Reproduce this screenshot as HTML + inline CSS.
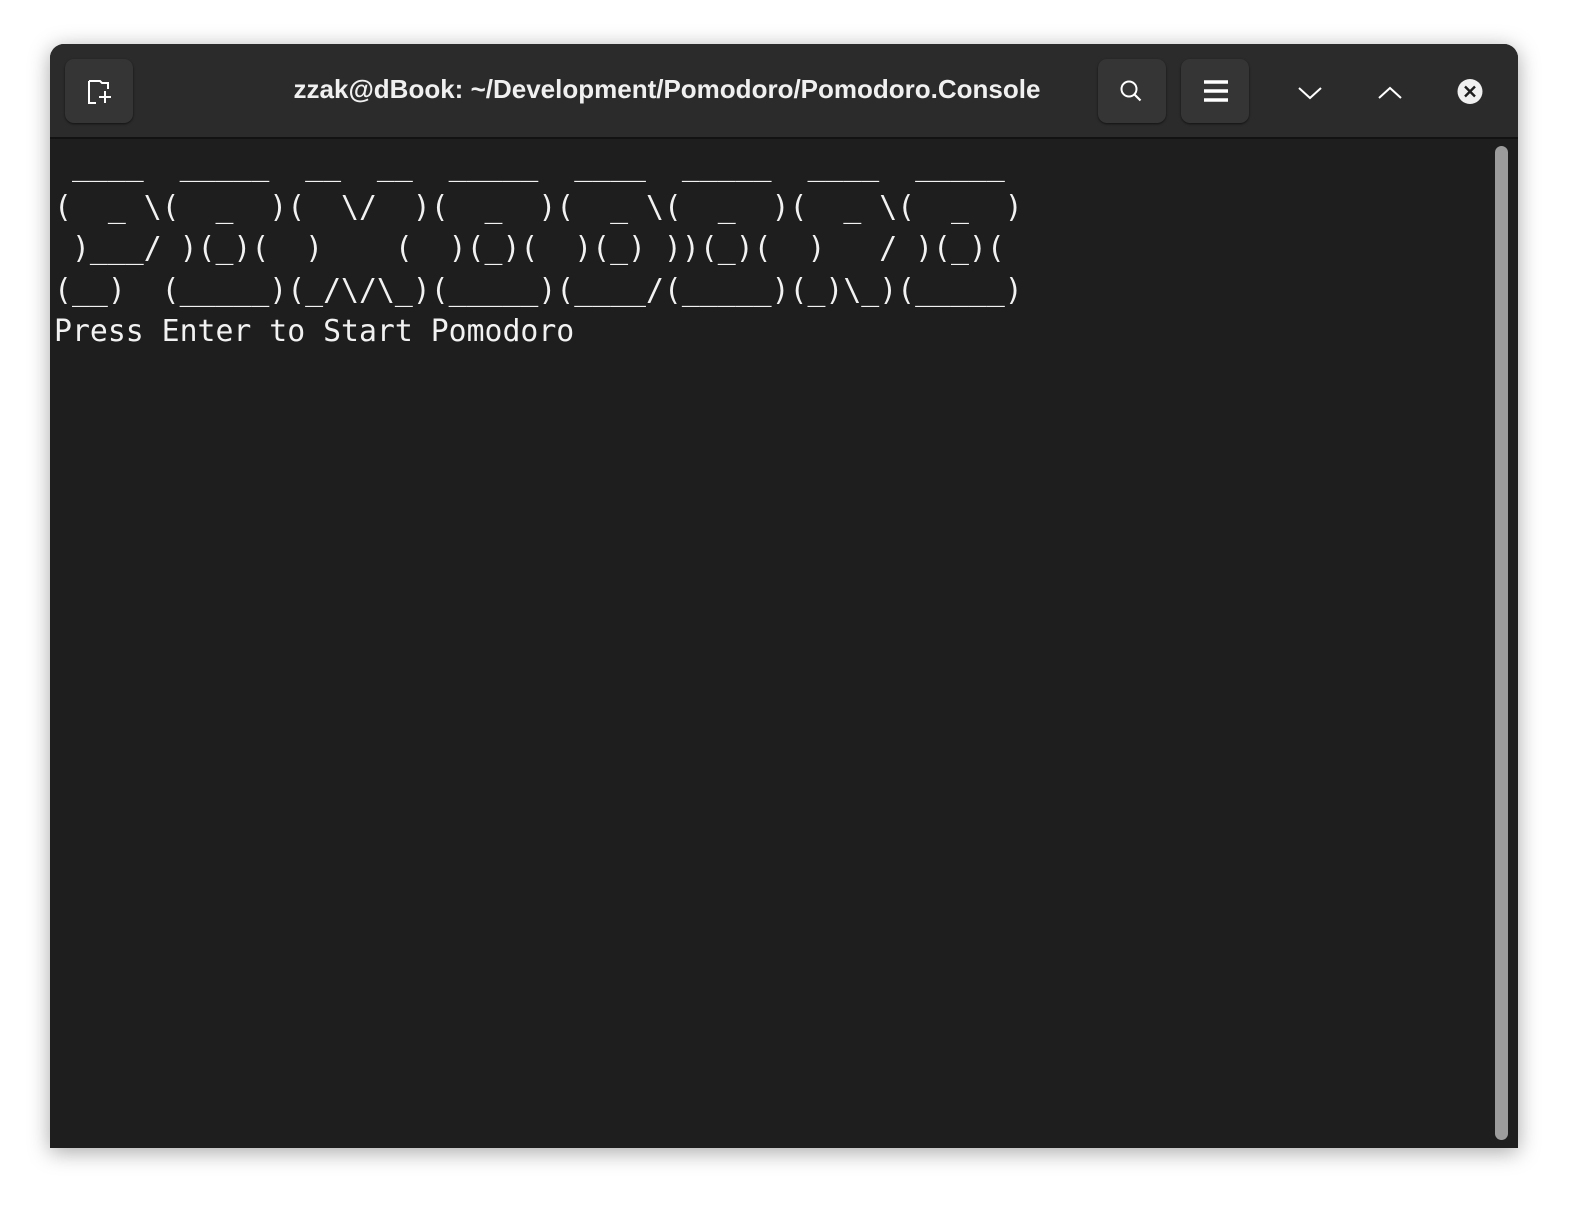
<!DOCTYPE html>
<html><head><meta charset="utf-8"><style>
html,body{margin:0;padding:0;background:#fff;width:1576px;height:1210px;overflow:hidden}
.win{position:absolute;left:50px;top:44px;width:1468px;height:1104px;background:#1e1e1e;border-radius:14px 14px 0 0;box-shadow:0 4px 22px rgba(0,0,0,.35);overflow:hidden}
.hdr{position:absolute;left:0;top:0;width:100%;height:93px;background:#2b2b2b;border-bottom:2px solid #121212}
.btn{position:absolute;top:15px;width:68px;height:64px;background:#353535;border-radius:9px;box-shadow:0 1px 2px rgba(0,0,0,.6)}
.title{position:absolute;left:0;width:1234px;top:30px;text-align:center;color:#f0f0f0;font:bold 26px "Liberation Sans",sans-serif;white-space:nowrap}
pre{position:absolute;left:4px;top:101px;margin:0;color:#f2f2f2;font:29.8px/41.5px "DejaVu Sans Mono","Liberation Mono",monospace}
.sb{position:absolute;left:1445px;top:102px;width:13px;height:994px;background:#9c9c9c;border-radius:7px}
</style></head><body>
<div class="win">
 <div class="hdr">
  <div class="btn" style="left:15px"><svg width="68" height="64" viewBox="0 0 68 64"><path d="M24 22h11l2 2h6v6M24 22v22h7" fill="none" stroke="#fff" stroke-width="2"/><path d="M40 32v12M34 38h12" stroke="#fff" stroke-width="2"/></svg></div>
  <div class="title">zzak@dBook: ~/Development/Pomodoro/Pomodoro.Console</div>
  <div class="btn" style="left:1048px"><svg width="68" height="64" viewBox="0 0 68 64"><circle cx="31" cy="30" r="7.5" fill="none" stroke="#fff" stroke-width="2"/><path d="M36.5 35.5l6 6" stroke="#fff" stroke-width="2.2"/></svg></div>
  <div class="btn" style="left:1131px"><svg width="68" height="64" viewBox="0 0 68 64"><path d="M23 23h24M23 32h24M23 41h24" stroke="#fff" stroke-width="3.5"/></svg></div>
  <svg style="position:absolute;left:1240px;top:30px" width="40" height="40" viewBox="0 0 40 40"><path d="M9 14l11 10 11-10" fill="none" stroke="#fff" stroke-width="2"/></svg>
  <svg style="position:absolute;left:1320px;top:30px" width="40" height="40" viewBox="0 0 40 40"><path d="M9 24l11-10 11 10" fill="none" stroke="#fff" stroke-width="2"/></svg>
  <svg style="position:absolute;left:1400px;top:30px" width="40" height="40" viewBox="0 0 40 40"><circle cx="20" cy="17.5" r="12.5" fill="#f0f0f0"/><path d="M15 12.5l10 10M25 12.5l-10 10" stroke="#1e1e1e" stroke-width="2.4"/></svg>
 </div>
<pre> ____  _____  __  __  _____  ____  _____  ____  _____
(  _ \(  _  )(  \/  )(  _  )(  _ \(  _  )(  _ \(  _  )
 )___/ )(_)(  )    (  )(_)(  )(_) ))(_)(  )   / )(_)(
(__)  (_____)(_/\/\_)(_____)(____/(_____)(_)\_)(_____)
Press Enter to Start Pomodoro</pre>
 <div class="sb"></div>
</div>
</body></html>
